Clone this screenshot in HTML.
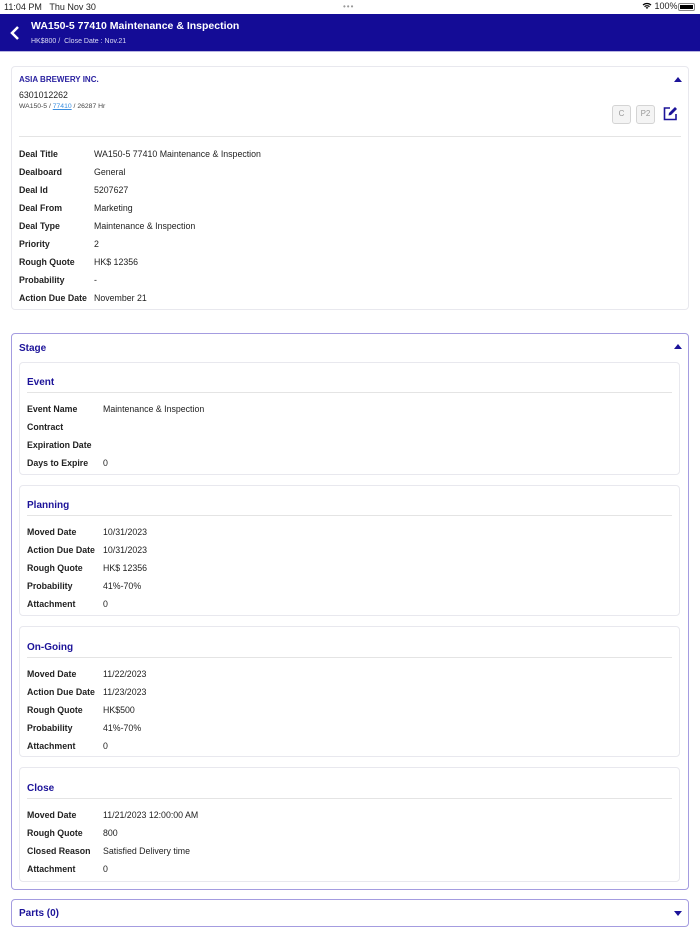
<!DOCTYPE html>
<html><head><meta charset="utf-8"><style>
*{box-sizing:border-box;margin:0;padding:0}
body{width:700px;height:934px;background:#fff;font-family:"Liberation Sans",sans-serif;color:#222;position:relative;overflow:hidden}
.abs{position:absolute}
.status{height:14px;font-size:9px;}
.hdr{top:14px;left:0;width:700px;height:38px;background:#140c96;border-bottom:1px solid #b8b4e0}
.card{position:absolute;border:1px solid #e8e8ee;border-radius:4px;background:#fff}
.row{position:absolute;font-size:8.8px;line-height:10px;white-space:nowrap}
.row b{position:absolute;left:0;font-weight:bold;color:#222}
.ttl{position:absolute;color:#1c1399;font-weight:bold;font-size:10px}
.tri-up{width:0;height:0;border-left:4px solid transparent;border-right:4px solid transparent;border-bottom:5px solid #1c1399;position:absolute}
.tri-dn{width:0;height:0;border-left:4px solid transparent;border-right:4px solid transparent;border-top:5px solid #1c1399;position:absolute}
.btn{position:absolute;width:19px;height:19px;border:1.5px solid #d4d4d4;border-radius:3px;background:#f4f4f4;color:#999;font-size:8px;text-align:center;line-height:16px}
.line{position:absolute;height:1px;background:#e4e4e4}
</style></head><body>
<div class="abs status" style="left:4px;top:2px;font-size:9px">11:04 PM&nbsp;&nbsp;&nbsp;Thu Nov 30</div>
<div class="abs" style="left:343px;top:2px;font-size:8px;color:#999;letter-spacing:1px">•••</div>
<div class="abs" style="left:642px;top:1px;font-size:9px">
<svg width="10" height="8" viewBox="0 0 10 8" style="vertical-align:-1px"><path d="M1 3a6 6 0 0 1 8 0M2.5 4.6a4 4 0 0 1 5 0M4 6.2a1.6 1.6 0 0 1 2 0" stroke="#000" stroke-width="1.2" fill="none"/></svg> 100%</div>
<div class="abs" style="left:678px;top:3px;width:17px;height:8px;border:1px solid #888;border-radius:2px;padding:1px"><div style="background:#000;width:100%;height:100%"></div></div>
<div class="abs hdr">
<svg class="abs" style="left:10px;top:11px" width="10" height="16" viewBox="0 0 10 16"><path d="M8 2L2 8l6 6" stroke="#fff" stroke-width="2.5" fill="none"/></svg>
<div class="abs" style="left:31px;top:6px;color:#fff;font-weight:bold;font-size:10.5px">WA150-5 77410 Maintenance &amp; Inspection</div>
<div class="abs" style="left:31px;top:24px;color:#dcdcf4;font-size:7px">HK$800 /&nbsp; Close Date : Nov.21</div>
</div>

<div class="card" style="left:11px;top:66px;width:678px;height:244px">
<div class="abs" style="left:7px;top:8px;font-size:8px;font-weight:bold;color:#2a22a0">ASIA BREWERY INC.</div>
<div class="abs" style="left:7px;top:23px;font-size:8.8px;color:#222">6301012262</div>
<div class="abs" style="left:7px;top:36px;font-size:6.8px;color:#444">WA150-5 / <span style="color:#3a8ee0;text-decoration:underline">77410</span> / 26287 Hr</div>
<div class="tri-up" style="left:662px;top:10px"></div>
<div class="btn" style="left:600px;top:38px">C</div>
<div class="btn" style="left:624px;top:38px">P2</div>
<svg class="abs" style="left:651px;top:39px" width="15" height="15" viewBox="0 0 15 15"><path d="M7 2H1.5v11.5H13V8" stroke="#1c1399" stroke-width="1.6" fill="none"/><path d="M5.5 9.5l.5-2.5 6-6 2 2-6 6z" fill="#1c1399"/></svg>
<div class="line" style="left:7px;right:7px;top:69px"></div>
<div class="row" style="left:7px;top:82px"><b>Deal Title</b><span style="margin-left:75px">WA150-5 77410 Maintenance &amp; Inspection</span></div>
<div class="row" style="left:7px;top:100px"><b>Dealboard</b><span style="margin-left:75px">General</span></div>
<div class="row" style="left:7px;top:118px"><b>Deal Id</b><span style="margin-left:75px">5207627</span></div>
<div class="row" style="left:7px;top:136px"><b>Deal From</b><span style="margin-left:75px">Marketing</span></div>
<div class="row" style="left:7px;top:154px"><b>Deal Type</b><span style="margin-left:75px">Maintenance &amp; Inspection</span></div>
<div class="row" style="left:7px;top:172px"><b>Priority</b><span style="margin-left:75px">2</span></div>
<div class="row" style="left:7px;top:190px"><b>Rough Quote</b><span style="margin-left:75px">HK$ 12356</span></div>
<div class="row" style="left:7px;top:208px"><b>Probability</b><span style="margin-left:75px">-</span></div>
<div class="row" style="left:7px;top:226px"><b>Action Due Date</b><span style="margin-left:75px">November 21</span></div>
</div>

<div class="card" style="left:11px;top:333px;width:678px;height:557px;border-color:#a49ce0">
<div class="ttl" style="left:7px;top:9px">Stage</div>
<div class="tri-up" style="left:662px;top:10px"></div>
</div>

<div class="card" style="left:19px;top:362px;width:661px;height:113px">
<div class="ttl" style="left:7px;top:14px">Event</div>
<div class="line" style="left:7px;right:7px;top:29px"></div>
<div class="row" style="left:7px;top:41px"><b>Event Name</b><span style="margin-left:76px">Maintenance &amp; Inspection</span></div>
<div class="row" style="left:7px;top:59px"><b>Contract</b></div>
<div class="row" style="left:7px;top:77px"><b>Expiration Date</b></div>
<div class="row" style="left:7px;top:95px"><b>Days to Expire</b><span style="margin-left:76px">0</span></div>
</div>

<div class="card" style="left:19px;top:485px;width:661px;height:131px">
<div class="ttl" style="left:7px;top:14px">Planning</div>
<div class="line" style="left:7px;right:7px;top:29px"></div>
<div class="row" style="left:7px;top:41px"><b>Moved Date</b><span style="margin-left:76px">10/31/2023</span></div>
<div class="row" style="left:7px;top:59px"><b>Action Due Date</b><span style="margin-left:76px">10/31/2023</span></div>
<div class="row" style="left:7px;top:77px"><b>Rough Quote</b><span style="margin-left:76px">HK$ 12356</span></div>
<div class="row" style="left:7px;top:95px"><b>Probability</b><span style="margin-left:76px">41%-70%</span></div>
<div class="row" style="left:7px;top:113px"><b>Attachment</b><span style="margin-left:76px">0</span></div>
</div>

<div class="card" style="left:19px;top:626px;width:661px;height:131px">
<div class="ttl" style="left:7px;top:15px">On-Going</div>
<div class="line" style="left:7px;right:7px;top:30px"></div>
<div class="row" style="left:7px;top:42px"><b>Moved Date</b><span style="margin-left:76px">11/22/2023</span></div>
<div class="row" style="left:7px;top:60px"><b>Action Due Date</b><span style="margin-left:76px">11/23/2023</span></div>
<div class="row" style="left:7px;top:78px"><b>Rough Quote</b><span style="margin-left:76px">HK$500</span></div>
<div class="row" style="left:7px;top:96px"><b>Probability</b><span style="margin-left:76px">41%-70%</span></div>
<div class="row" style="left:7px;top:114px"><b>Attachment</b><span style="margin-left:76px">0</span></div>
</div>

<div class="card" style="left:19px;top:767px;width:661px;height:115px">
<div class="ttl" style="left:7px;top:15px">Close</div>
<div class="line" style="left:7px;right:7px;top:30px"></div>
<div class="row" style="left:7px;top:42px"><b>Moved Date</b><span style="margin-left:76px">11/21/2023 12:00:00 AM</span></div>
<div class="row" style="left:7px;top:60px"><b>Rough Quote</b><span style="margin-left:76px">800</span></div>
<div class="row" style="left:7px;top:78px"><b>Closed Reason</b><span style="margin-left:76px">Satisfied Delivery time</span></div>
<div class="row" style="left:7px;top:96px"><b>Attachment</b><span style="margin-left:76px">0</span></div>
</div>

<div class="card" style="left:11px;top:899px;width:678px;height:28px;border-color:#a49ce0">
<div class="ttl" style="left:7px;top:8px">Parts (0)</div>
<div class="tri-dn" style="left:662px;top:11px"></div>
</div>
</body></html>
